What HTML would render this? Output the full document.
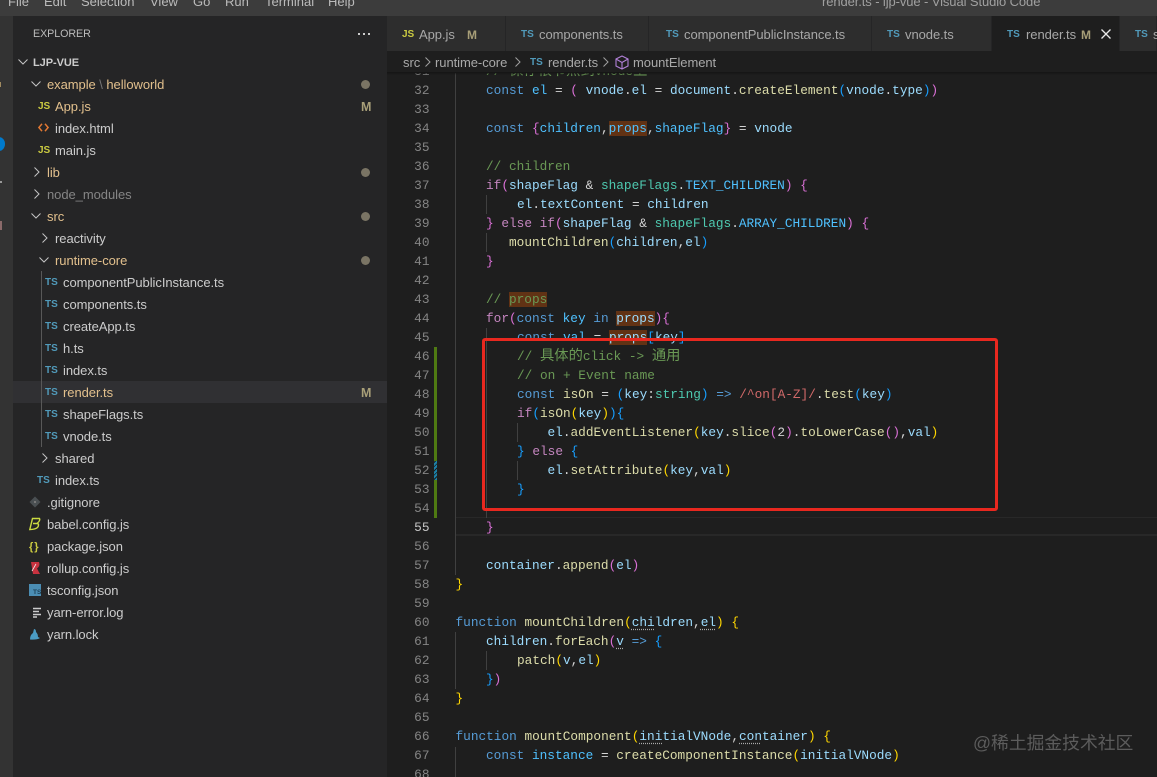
<!DOCTYPE html>
<html><head><meta charset="utf-8"><style>
html,body{margin:0;padding:0;background:#1e1e1e;}
#p{position:relative;width:1157px;height:777px;overflow:hidden;background:#1e1e1e;font-family:"Liberation Sans","Noto Sans CJK SC",sans-serif;filter:blur(.35px);}
.a{position:absolute;}
.m{position:absolute;top:-7px;font-size:13px;color:#bbb;line-height:18px;white-space:pre;}
.r{position:absolute;height:22px;line-height:24px;font-size:13px;color:#ccc;white-space:pre;letter-spacing:-.06px;}
.y{color:#e2c08d}.d{color:#858585}
.i{position:absolute;font-weight:bold;font-size:10px;line-height:12px;white-space:pre;margin-top:1px;}
.js{color:#cbcb41}.ts{color:#519aba}
.g{position:absolute;width:9px;height:9px;border-radius:50%;background:#7a7464;left:361px;}
.M{position:absolute;left:361px;font-size:12.5px;font-weight:bold;color:#a89f78;line-height:24px;}
svg{position:absolute;overflow:visible;}
.t{position:absolute;top:16px;height:35px;background:#2d2d2d;border-right:1px solid #252526;box-sizing:border-box;}
.tt{position:absolute;top:16px;height:35px;line-height:38px;font-size:13px;color:#a8a8a8;white-space:pre;letter-spacing:-.06px;}
.b{position:absolute;top:51px;height:22px;line-height:24px;font-size:13px;color:#a9a9a9;white-space:pre;letter-spacing:-.06px;}
#ed{position:absolute;left:387px;top:73px;width:770px;height:704px;overflow:hidden;}
.n{position:absolute;left:0;width:42.5px;text-align:right;font:12.77px/19px "Liberation Mono",monospace;color:#858585;}
.l{position:absolute;font:12.77px/19px "Liberation Mono","Noto Sans CJK SC",monospace;white-space:pre;color:#d4d4d4;}
.k{color:#569cd6}.v{color:#9cdcfe}.f{color:#dcdcaa}.c{color:#c586c0}.e{color:#6a9955}.q{color:#4ec9b0}.o{color:#4fc1ff}.x{color:#d16969}
.Y{color:#ffd700}.P{color:#da70d6}.B{color:#179fff}
.h{background:#613214}
.u{text-decoration:underline dotted #aaa;text-underline-offset:3px;}
.z{font-size:14.3px}
.w{position:absolute;width:1px;background:#404040;}
</style></head><body><div id="p">

<div class="a" style="left:0;top:0;width:1157px;height:16px;background:#3c3c3c"></div>
<div class="m" style="left:8px">File</div><div class="m" style="left:44px">Edit</div><div class="m" style="left:81px">Selection</div><div class="m" style="left:150px">View</div><div class="m" style="left:193px">Go</div><div class="m" style="left:225px">Run</div><div class="m" style="left:265px">Terminal</div><div class="m" style="left:328px">Help</div>
<div class="m" style="left:822px;color:#a0a0a0;letter-spacing:-.1px">render.ts - ljp-vue - Visual Studio Code</div>

<div class="a" style="left:0;top:16px;width:13px;height:761px;background:#333"></div>
<div class="a" style="left:-7px;top:137px;width:12px;height:14px;border-radius:50%;background:#007acc"></div>
<div class="a" style="left:0;top:181px;width:2px;height:2px;background:#999"></div>
<div class="a" style="left:0;top:221px;width:2px;height:9px;background:#8a6a6a"></div>
<div class="a" style="left:0;top:82px;width:1px;height:5px;background:#a08a60"></div>

<div class="a" style="left:13px;top:16px;width:374px;height:761px;background:#252526"></div>
<div class="r" style="left:33px;top:22px;font-size:10.7px;color:#bbb">EXPLORER</div>
<div class="a" style="left:358px;top:33px;width:2px;height:2px;background:#ccc;box-shadow:5px 0 0 #ccc,10px 0 0 #ccc"></div>
<div class="r" style="left:33px;top:51px;font-size:11px;font-weight:bold;color:#ccc">LJP-VUE</div>
<svg style="left:18px;top:58px" width="10" height="8" fill="none" stroke="#c5c5c5" stroke-width="1"><path d="M0.5 1.5L5 6L9.5 1.5"/></svg>

<svg style="left:31px;top:80px" width="10" height="8" fill="none" stroke="#c5c5c5"><path d="M0.5 1.5L5 6L9.5 1.5"/></svg>
<div class="r y" style="left:47px;top:73px">example<span style="color:#777"> \ </span>helloworld</div><div class="g" style="top:80px"></div>
<div class="i js" style="left:38px;top:100px">JS</div><div class="r y" style="left:55px;top:95px">App.js</div><div class="M" style="top:95px">M</div>
<svg style="left:38px;top:123px" width="11" height="9" fill="none" stroke="#e37933" stroke-width="1.5"><path d="M4 .8L.9 4.5L4 8.2M7 .8L10.1 4.5L7 8.2"/></svg>
<div class="r" style="left:55px;top:117px">index.html</div>
<div class="i js" style="left:38px;top:144px">JS</div><div class="r" style="left:55px;top:139px">main.js</div>
<svg style="left:33px;top:167px" width="8" height="10" fill="none" stroke="#c5c5c5"><path d="M1.5 .5L6 5L1.5 9.5"/></svg>
<div class="r y" style="left:47px;top:161px">lib</div><div class="g" style="top:168px"></div>
<svg style="left:33px;top:189px" width="8" height="10" fill="none" stroke="#c5c5c5"><path d="M1.5 .5L6 5L1.5 9.5"/></svg>
<div class="r d" style="left:47px;top:183px">node_modules</div>
<svg style="left:31px;top:212px" width="10" height="8" fill="none" stroke="#c5c5c5"><path d="M0.5 1.5L5 6L9.5 1.5"/></svg>
<div class="r y" style="left:47px;top:205px">src</div><div class="g" style="top:212px"></div>
<svg style="left:41px;top:233px" width="8" height="10" fill="none" stroke="#c5c5c5"><path d="M1.5 .5L6 5L1.5 9.5"/></svg>
<div class="r" style="left:55px;top:227px">reactivity</div>
<svg style="left:39px;top:256px" width="10" height="8" fill="none" stroke="#c5c5c5"><path d="M0.5 1.5L5 6L9.5 1.5"/></svg>
<div class="r y" style="left:55px;top:249px">runtime-core</div><div class="g" style="top:256px"></div>

<div class="a" style="left:13px;top:381px;width:374px;height:22px;background:#303033"></div>
<div class="a" style="left:41px;top:271px;width:1px;height:176px;background:#585858"></div>

<div class="i ts" style="left:45px;top:276px">TS</div><div class="r" style="left:63px;top:271px">componentPublicInstance.ts</div>
<div class="i ts" style="left:45px;top:298px">TS</div><div class="r" style="left:63px;top:293px">components.ts</div>
<div class="i ts" style="left:45px;top:320px">TS</div><div class="r" style="left:63px;top:315px">createApp.ts</div>
<div class="i ts" style="left:45px;top:342px">TS</div><div class="r" style="left:63px;top:337px">h.ts</div>
<div class="i ts" style="left:45px;top:364px">TS</div><div class="r" style="left:63px;top:359px">index.ts</div>
<div class="i ts" style="left:45px;top:386px">TS</div><div class="r y" style="left:63px;top:381px">render.ts</div><div class="M" style="top:381px">M</div>
<div class="i ts" style="left:45px;top:408px">TS</div><div class="r" style="left:63px;top:403px">shapeFlags.ts</div>
<div class="i ts" style="left:45px;top:430px">TS</div><div class="r" style="left:63px;top:425px">vnode.ts</div>
<svg style="left:41px;top:453px" width="8" height="10" fill="none" stroke="#c5c5c5"><path d="M1.5 .5L6 5L1.5 9.5"/></svg>
<div class="r" style="left:55px;top:447px">shared</div>
<div class="i ts" style="left:37px;top:474px">TS</div><div class="r" style="left:55px;top:469px">index.ts</div>

<svg style="left:29px;top:496px" width="12" height="12"><path d="M6 .5L11.5 6L6 11.5L.5 6Z" fill="#4a4f52"/><path d="M5 5h2v2h-2z" fill="#777"/></svg>
<div class="r" style="left:47px;top:491px">.gitignore</div>
<svg style="left:29px;top:517px" width="12" height="14" fill="none" stroke="#cbdb41" stroke-width="1.4"><path d="M3.5 1.5H10.5Q11.5 3.5 8.5 6Q10.5 8 8.5 10.5Q6 12.5 .8 12.5ZM4 6.5H8.5"/></svg>
<div class="r" style="left:47px;top:513px">babel.config.js</div>
<div class="i" style="left:29px;top:540px;color:#cbcb41;font-size:11px;letter-spacing:1px">{}</div>
<div class="r" style="left:47px;top:535px">package.json</div>
<svg style="left:31px;top:562px" width="9" height="12"><path d="M0 0H8Q9.5 4 6 6.5L9 12H2Z" fill="#c8323f"/><path d="M5 2L1 9" stroke="#eee" stroke-width=".8"/></svg>
<div class="r" style="left:47px;top:557px">rollup.config.js</div>
<div class="a" style="left:29px;top:584px;width:12px;height:12px;background:#4b8db3"></div>
<div class="i" style="left:33px;top:588px;font-size:6.5px;line-height:8px;color:#1d3f55">TS</div>
<div class="r" style="left:47px;top:579px">tsconfig.json</div>
<svg style="left:32px;top:607px" width="10" height="11" stroke="#ccc" stroke-width="1.4"><path d="M1 1.5H9M1 4.5H7M1 7.5H9M1 10H5"/></svg>
<div class="r" style="left:47px;top:601px">yarn-error.log</div>
<svg style="left:29px;top:628px" width="12" height="12"><path d="M5 1Q7 1 7 4Q9 6 9 9L11 10Q8 12 1 11.5Q1 7 4 5Z" fill="#4b9cc4"/></svg>
<div class="r" style="left:47px;top:623px">yarn.lock</div>

<div class="a" style="left:387px;top:16px;width:770px;height:35px;background:#252526"></div>
<div class="t" style="left:387px;width:119px"></div><div class="t" style="left:506px;width:143px"></div><div class="t" style="left:649px;width:223px"></div><div class="t" style="left:872px;width:120px"></div><div class="t" style="left:992px;width:128px;background:#1e1e1e"></div><div class="t" style="left:1120px;width:37px"></div>
<div class="i js" style="left:402px;top:28px">JS</div><div class="tt y" style="left:419px">App.js</div><div class="tt" style="left:467px;color:#a89f78;font-weight:bold;font-size:12px">M</div>
<div class="i ts" style="left:521px;top:28px">TS</div><div class="tt" style="left:539px">components.ts</div>
<div class="i ts" style="left:666px;top:28px">TS</div><div class="tt" style="left:684px">componentPublicInstance.ts</div>
<div class="i ts" style="left:887px;top:28px">TS</div><div class="tt" style="left:905px">vnode.ts</div>
<div class="i ts" style="left:1007px;top:28px">TS</div><div class="tt y" style="left:1026px">render.ts</div><div class="tt" style="left:1081px;color:#a89f78;font-weight:bold;font-size:12px">M</div>
<svg style="left:1101px;top:29px" width="10" height="10" stroke="#e8e8e8" stroke-width="1.3"><path d="M.5 .5L9.5 9.5M9.5 .5L.5 9.5"/></svg>
<div class="i ts" style="left:1135px;top:28px">TS</div><div class="tt" style="left:1153px">s</div>

<div class="b" style="left:403px">src</div>
<svg style="left:425px;top:57px" width="6" height="10" fill="none" stroke="#a0a0a0"><path d="M.5 .5L5 5L.5 9.5"/></svg>
<div class="b" style="left:435px">runtime-core</div>
<svg style="left:515px;top:57px" width="6" height="10" fill="none" stroke="#a0a0a0"><path d="M.5 .5L5 5L.5 9.5"/></svg>
<div class="i ts" style="left:530px;top:56px">TS</div>
<div class="b" style="left:548px">render.ts</div>
<svg style="left:603px;top:57px" width="6" height="10" fill="none" stroke="#a0a0a0"><path d="M.5 .5L5 5L.5 9.5"/></svg>
<svg style="left:615px;top:55px" width="14" height="15" fill="none" stroke="#b180d7" stroke-width="1.1"><path d="M7 1L13 4V11L7 14L1 11V4ZM1 4L7 7.5L13 4M7 7.5V14"/></svg>
<div class="b" style="left:633px">mountElement</div>

<div id="ed">
<div class="a" style="left:69px;top:444px;width:701px;height:19px;box-sizing:border-box;border:solid #282828;border-width:1px 0 2px"></div>

<div class="w" style="left:68px;top:0;height:502px"></div>
<div class="w" style="left:68px;top:559px;height:57px"></div>
<div class="w" style="left:68px;top:674px;height:30px"></div>
<div class="w" style="left:99px;top:122px;height:19px"></div>
<div class="w" style="left:99px;top:160px;height:19px"></div>
<div class="w" style="left:99px;top:255px;height:190px"></div>
<div class="w" style="left:130px;top:350px;height:19px"></div>
<div class="w" style="left:130px;top:388px;height:19px"></div>
<div class="w" style="left:99px;top:578px;height:19px"></div>

<div class="n" style="top:-11px">31</div><div class="n" style="top:8px">32</div><div class="n" style="top:27px">33</div><div class="n" style="top:46px">34</div><div class="n" style="top:65px">35</div><div class="n" style="top:84px">36</div><div class="n" style="top:103px">37</div><div class="n" style="top:122px">38</div><div class="n" style="top:141px">39</div><div class="n" style="top:160px">40</div><div class="n" style="top:179px">41</div><div class="n" style="top:198px">42</div><div class="n" style="top:217px">43</div><div class="n" style="top:236px">44</div><div class="n" style="top:255px">45</div><div class="n" style="top:274px">46</div><div class="n" style="top:293px">47</div><div class="n" style="top:312px">48</div><div class="n" style="top:331px">49</div><div class="n" style="top:350px">50</div><div class="n" style="top:369px">51</div><div class="n" style="top:388px">52</div><div class="n" style="top:407px">53</div><div class="n" style="top:426px">54</div><div class="n" style="top:445px;color:#c6c6c6">55</div><div class="n" style="top:464px">56</div><div class="n" style="top:483px">57</div><div class="n" style="top:502px">58</div><div class="n" style="top:521px">59</div><div class="n" style="top:540px">60</div><div class="n" style="top:559px">61</div><div class="n" style="top:578px">62</div><div class="n" style="top:597px">63</div><div class="n" style="top:616px">64</div><div class="n" style="top:635px">65</div><div class="n" style="top:654px">66</div><div class="n" style="top:673px">67</div><div class="n" style="top:692px">68</div>

<div class="a" style="left:47px;top:274px;width:3px;height:171px;background:#4f7a12"></div>
<div class="a" style="left:47px;top:388px;width:3px;height:19px;background:repeating-linear-gradient(-45deg,#1b81a8 0 2px,#1e1e1e 2px 3px)"></div>

<div class="l e" style="left:99px;top:-11px">// <span class="z">保存根节点到</span>vnode<span class="z">上</span></div>
<div class="l" style="left:99px;top:8px"><span class="k">const</span> <span class="o">el</span> = <span class="P">(</span> <span class="v">vnode</span>.<span class="v">el</span> = <span class="v">document</span>.<span class="f">createElement</span><span class="B">(</span><span class="v">vnode</span>.<span class="v">type</span><span class="B">)</span><span class="P">)</span></div>
<div class="l" style="left:99px;top:46px"><span class="k">const</span> <span class="P">{</span><span class="o">children</span>,<span class="o h">props</span>,<span class="o">shapeFlag</span><span class="P">}</span> = <span class="v">vnode</span></div>
<div class="l e" style="left:99px;top:84px">// children</div>
<div class="l" style="left:99px;top:103px"><span class="c">if</span><span class="P">(</span><span class="v">shapeFlag</span> &amp; <span class="q">shapeFlags</span>.<span class="o">TEXT_CHILDREN</span><span class="P">)</span> <span class="P">{</span></div>
<div class="l" style="left:130px;top:122px"><span class="v">el</span>.<span class="v">textContent</span> = <span class="v">children</span></div>
<div class="l" style="left:99px;top:141px"><span class="P">}</span> <span class="c">else if</span><span class="P">(</span><span class="v">shapeFlag</span> &amp; <span class="q">shapeFlags</span>.<span class="o">ARRAY_CHILDREN</span><span class="P">)</span> <span class="P">{</span></div>
<div class="l" style="left:122px;top:160px"><span class="f">mountChildren</span><span class="B">(</span><span class="v">children</span>,<span class="v">el</span><span class="B">)</span></div>
<div class="l" style="left:99px;top:179px"><span class="P">}</span></div>
<div class="l e" style="left:99px;top:217px">// <span class="h">props</span></div>
<div class="l" style="left:99px;top:236px"><span class="c">for</span><span class="P">(</span><span class="k">const</span> <span class="o">key</span> <span class="k">in</span> <span class="v h">props</span><span class="P">)</span><span class="P">{</span></div>
<div class="l" style="left:130px;top:255px"><span class="k">const</span> <span class="o">val</span> = <span class="v h">props</span><span class="B">[</span><span class="v">key</span><span class="B">]</span></div>
<div class="l e" style="left:130px;top:274px">// <span class="z">具体的</span>click -&gt; <span class="z">通用</span></div>
<div class="l e" style="left:130px;top:293px">// on + Event name</div>
<div class="l" style="left:130px;top:312px"><span class="k">const</span> <span class="f">isOn</span> = <span class="B">(</span><span class="v">key</span>:<span class="q">string</span><span class="B">)</span> <span class="k">=&gt;</span> <span class="x">/^on[A-Z]/</span>.<span class="f">test</span><span class="B">(</span><span class="v">key</span><span class="B">)</span></div>
<div class="l" style="left:130px;top:331px"><span class="c">if</span><span class="B">(</span><span class="f">isOn</span><span class="Y">(</span><span class="v">key</span><span class="Y">)</span><span class="B">)</span><span class="B">{</span></div>
<div class="l" style="left:160.5px;top:350px"><span class="v">el</span>.<span class="f">addEventListener</span><span class="Y">(</span><span class="v">key</span>.<span class="f">slice</span><span class="P">(</span>2<span class="P">)</span>.<span class="f">toLowerCase</span><span class="P">()</span>,<span class="v">val</span><span class="Y">)</span></div>
<div class="l" style="left:130px;top:369px"><span class="B">}</span> <span class="c">else</span> <span class="B">{</span></div>
<div class="l" style="left:160.5px;top:388px"><span class="v">el</span>.<span class="f">setAttribute</span><span class="Y">(</span><span class="v">key</span>,<span class="v">val</span><span class="Y">)</span></div>
<div class="l" style="left:130px;top:407px"><span class="B">}</span></div>
<div class="l" style="left:99px;top:445px"><span class="P">}</span></div>
<div class="l" style="left:99px;top:483px"><span class="v">container</span>.<span class="f">append</span><span class="P">(</span><span class="v">el</span><span class="P">)</span></div>
<div class="l" style="left:68.5px;top:502px"><span class="Y">}</span></div>
<div class="l" style="left:68.5px;top:540px"><span class="k">function</span> <span class="f">mountChildren</span><span class="Y">(</span><span class="v"><span class="u">chi</span>ldren</span>,<span class="v u">el</span><span class="Y">)</span> <span class="Y">{</span></div>
<div class="l" style="left:99px;top:559px"><span class="v">children</span>.<span class="f">forEach</span><span class="P">(</span><span class="v u">v</span> <span class="k">=&gt;</span> <span class="B">{</span></div>
<div class="l" style="left:130px;top:578px"><span class="f">patch</span><span class="Y">(</span><span class="v">v</span>,<span class="v">el</span><span class="Y">)</span></div>
<div class="l" style="left:99px;top:597px"><span class="B">}</span><span class="P">)</span></div>
<div class="l" style="left:68.5px;top:616px"><span class="Y">}</span></div>
<div class="l" style="left:68.5px;top:654px"><span class="k">function</span> <span class="f">mountComponent</span><span class="Y">(</span><span class="v"><span class="u">ini</span>tialVNode</span>,<span class="v"><span class="u">con</span>tainer</span><span class="Y">)</span> <span class="Y">{</span></div>
<div class="l" style="left:99px;top:673px"><span class="k">const</span> <span class="o">instance</span> = <span class="f">createComponentInstance</span><span class="Y">(</span><span class="v">initialVNode</span><span class="Y">)</span></div>
</div>
<div class="a" style="left:387px;top:72px;width:770px;height:3px;background:linear-gradient(#141414,rgba(20,20,20,0))"></div>

<div class="a" style="left:482px;top:338px;width:516px;height:173px;box-sizing:border-box;border:3px solid #e8281f;border-radius:3px"></div>
<div class="a" style="left:973px;top:731px;font-size:17.8px;line-height:24px;color:#5c5c5c;white-space:pre">@稀土掘金技术社区</div>
</div></body></html>
